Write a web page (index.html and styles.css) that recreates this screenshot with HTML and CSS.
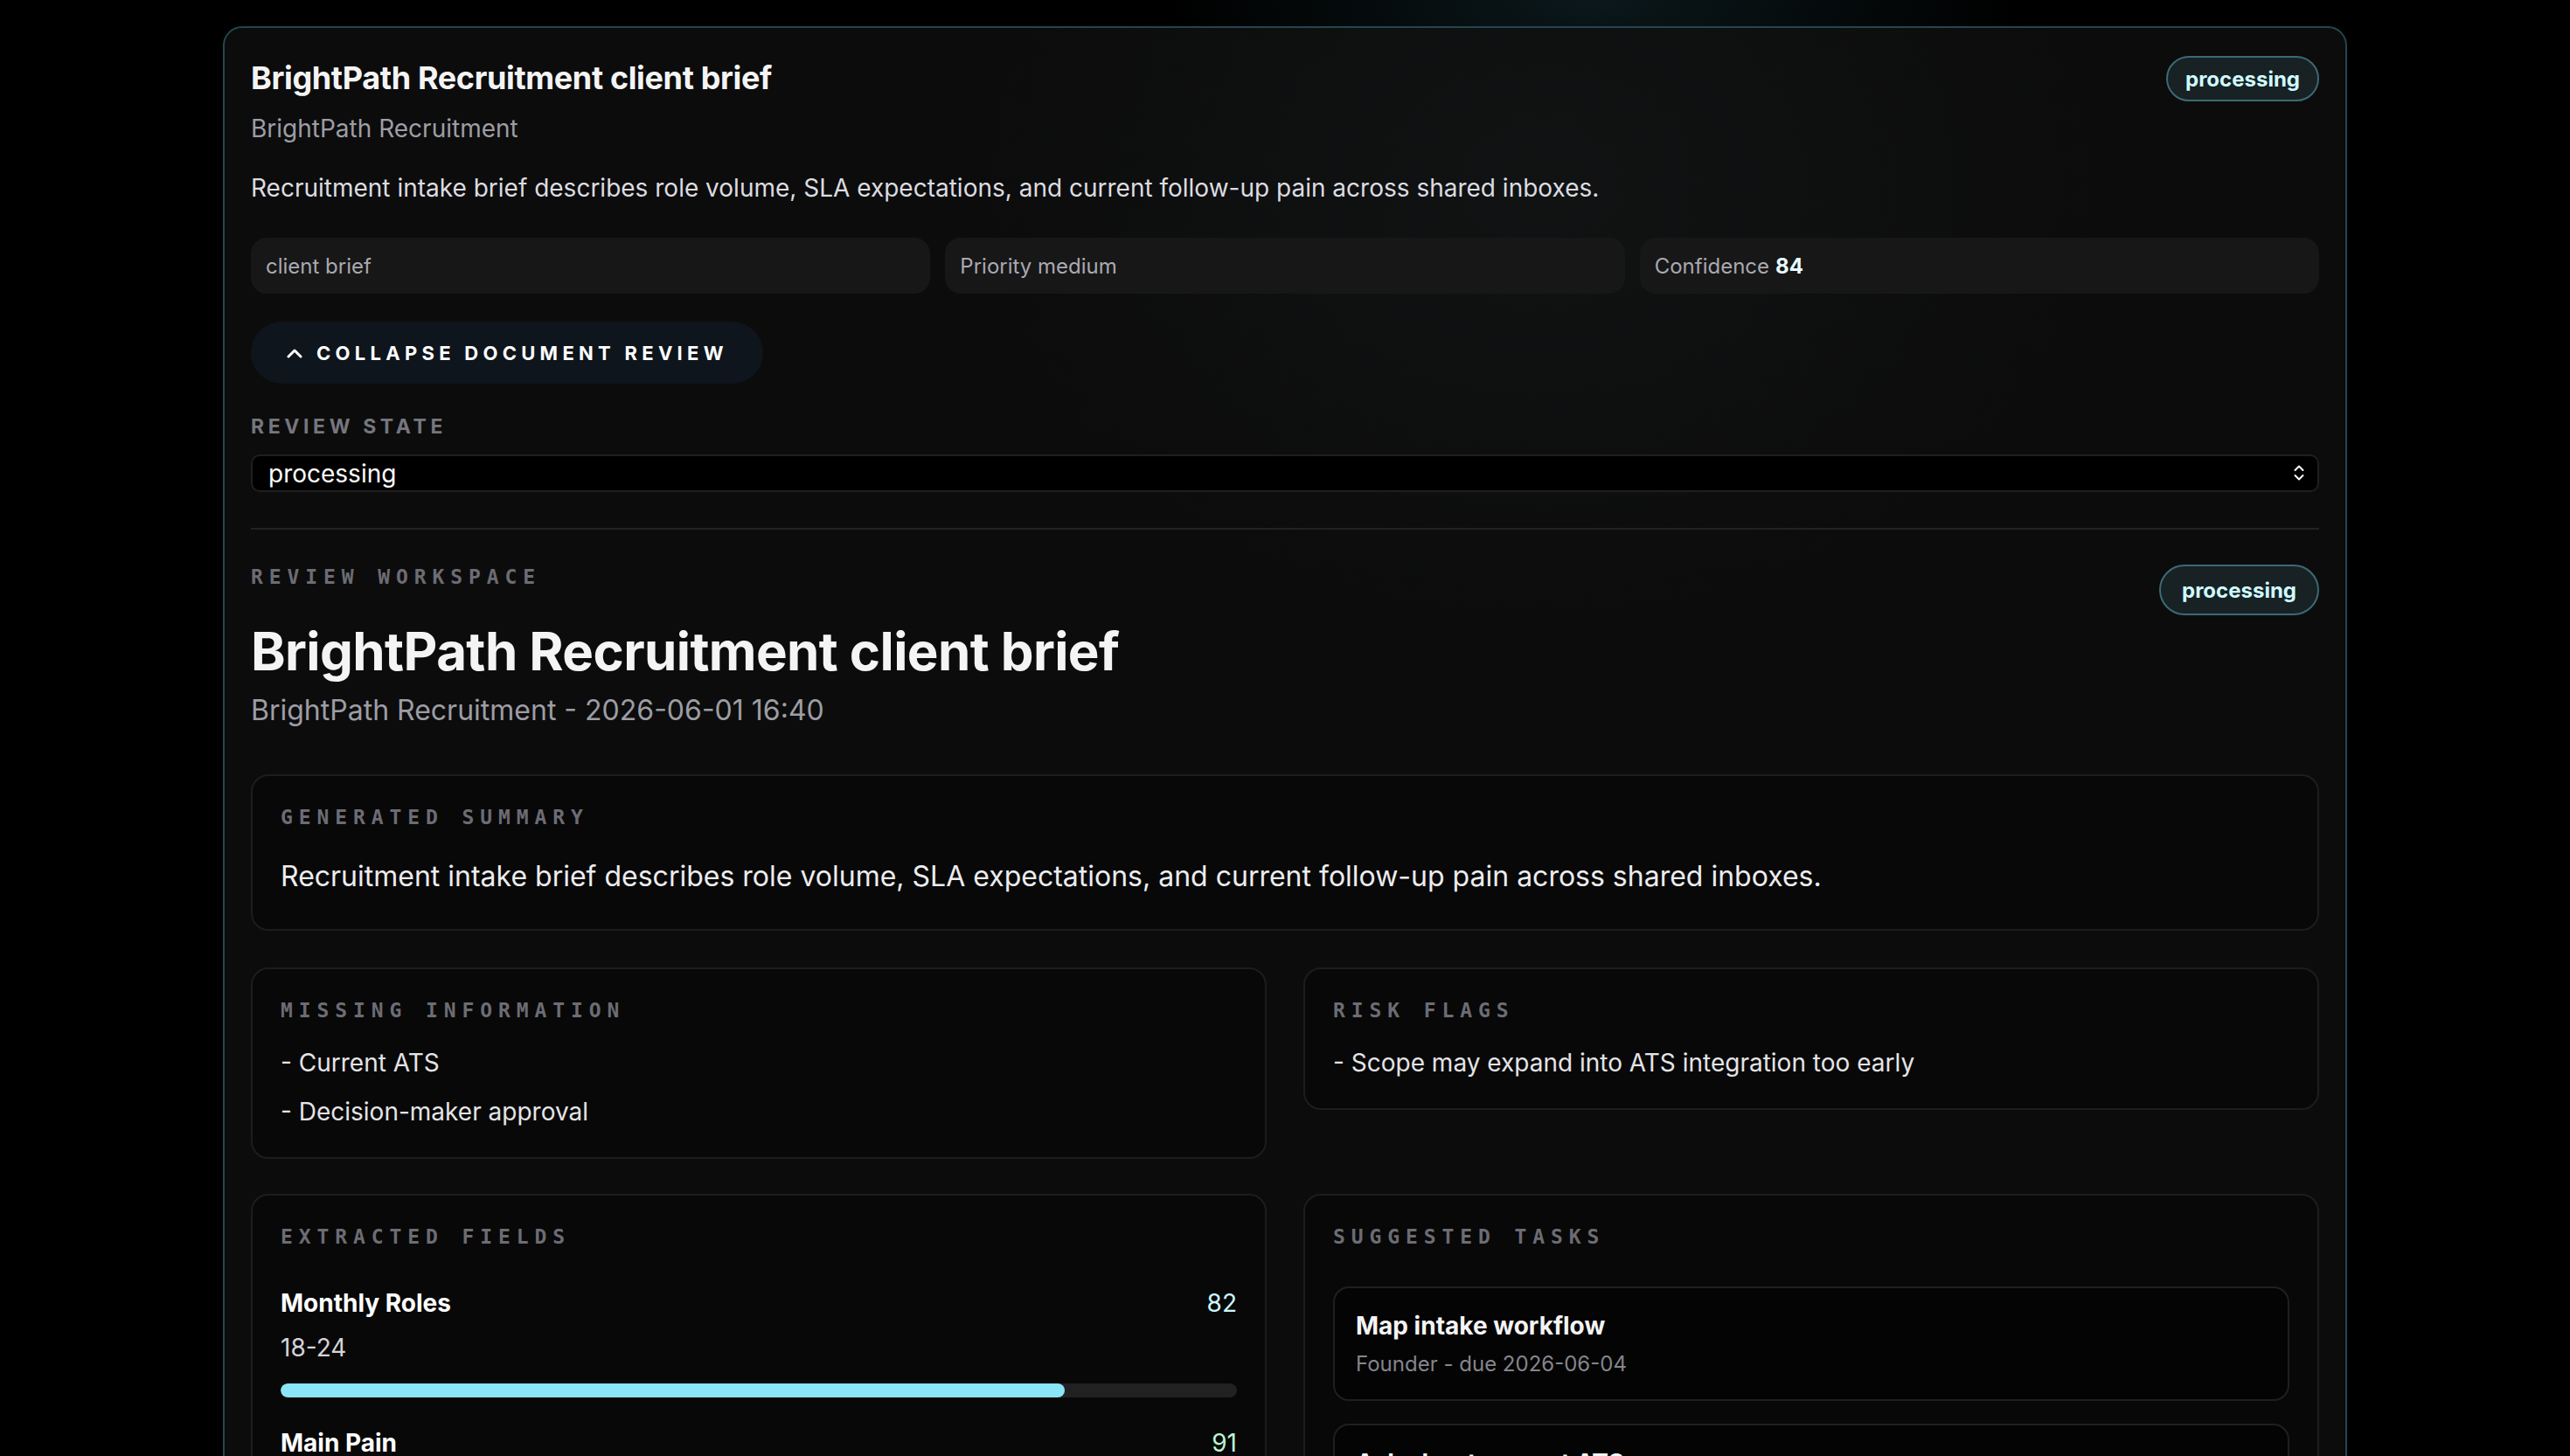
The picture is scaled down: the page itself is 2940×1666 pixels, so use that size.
FILE: index.html
```html
<!DOCTYPE html>
<html lang="en">
<head>
    <meta charset="UTF-8">
    <meta name="viewport" content="width=device-width, initial-scale=1.0">
    <title>BrightPath Recruitment client brief</title>
    <link rel="stylesheet" href="styles.css">
</head>
<body>
    <div class="page">
        <section class="doc-card">
            <div class="doc-head">
                <h2 class="doc-title">BrightPath Recruitment client brief</h2>
                <span class="status-pill">processing</span>
            </div>
            <p class="doc-client">BrightPath Recruitment</p>
            <p class="doc-desc">Recruitment intake brief describes role volume, SLA expectations, and current follow-up pain across shared inboxes.</p>

            <div class="chip-row">
                <div class="chip">client brief</div>
                <div class="chip">Priority medium</div>
                <div class="chip">Confidence <strong>84</strong></div>
            </div>

            <button class="collapse-btn" type="button">
                <svg class="collapse-icon" viewBox="0 0 20 12" width="20" height="12" aria-hidden="true">
                    <path d="M3 10 L10 3 L17 10" fill="none" stroke="#ffffff" stroke-width="3" stroke-linecap="round" stroke-linejoin="round"/>
                </svg>
                Collapse document review
            </button>

            <label class="state-label" for="reviewState">Review state</label>
            <div class="select-wrap">
                <select id="reviewState" class="state-select">
                    <option>processing</option>
                    <option>needs review</option>
                    <option>approved</option>
                </select>
                <svg class="select-arrows" viewBox="0 0 14 22" width="14" height="22" aria-hidden="true">
                    <path d="M2.5 8 L7 3.5 L11.5 8" fill="none" stroke="#ffffff" stroke-width="2" stroke-linecap="round" stroke-linejoin="round"/>
                    <path d="M2.5 14 L7 18.5 L11.5 14" fill="none" stroke="#ffffff" stroke-width="2" stroke-linecap="round" stroke-linejoin="round"/>
                </svg>
            </div>

            <hr class="divider">

            <div class="ws-head">
                <div>
                    <p class="mono-label">Review workspace</p>
                    <h1 class="ws-title">BrightPath Recruitment client brief</h1>
                    <p class="ws-meta">BrightPath Recruitment - 2026-06-01 16:40</p>
                </div>
                <span class="status-pill status-pill-lg">processing</span>
            </div>

            <div class="panel summary">
                <p class="mono-label">Generated summary</p>
                <p class="summary-text">Recruitment intake brief describes role volume, SLA expectations, and current follow-up pain across shared inboxes.</p>
            </div>

            <div class="panel-grid">
                <div class="panel">
                    <p class="mono-label">Missing information</p>
                    <ul class="plain-list">
                        <li>- Current ATS</li>
                        <li>- Decision-maker approval</li>
                    </ul>
                </div>
                <div class="panel">
                    <p class="mono-label">Risk flags</p>
                    <ul class="plain-list">
                        <li>- Scope may expand into ATS integration too early</li>
                    </ul>
                </div>

                <div class="panel">
                    <p class="mono-label">Extracted fields</p>
                    <div class="field-list">
                        <div class="field">
                            <div class="field-top">
                                <span class="field-name">Monthly Roles</span>
                                <span class="field-score">82</span>
                            </div>
                            <div class="field-value">18-24</div>
                            <div class="bar"><div class="bar-fill" style="width: 82%"></div></div>
                        </div>
                        <div class="field">
                            <div class="field-top">
                                <span class="field-name">Main Pain</span>
                                <span class="field-score score-high">91</span>
                            </div>
                            <div class="field-value">Follow-up across shared inboxes</div>
                            <div class="bar"><div class="bar-fill" style="width: 91%"></div></div>
                        </div>
                    </div>
                </div>
                <div class="panel">
                    <p class="mono-label">Suggested tasks</p>
                    <div class="task-list">
                        <div class="task">
                            <div class="task-title">Map intake workflow</div>
                            <div class="task-meta">Founder - due 2026-06-04</div>
                        </div>
                        <div class="task">
                            <div class="task-title">Ask about current ATS</div>
                            <div class="task-meta">Founder - due 2026-06-05</div>
                        </div>
                    </div>
                </div>
            </div>
        </section>
    </div>
</body>
</html>
```

FILE: styles.css
```css
* {
    box-sizing: border-box;
}

body {
    margin: 0;
    padding: 0;
    font-family: Inter, "Noto Sans", sans-serif;
    color: #f4f4f5;
    background:
        radial-gradient(ellipse 700px 260px at 62% 0%, rgba(24, 52, 60, 0.45), transparent 70%),
        #000000;
}

.page {
    padding: 30px 0 60px;
}

.doc-card {
    width: 2430px;
    margin: 0 auto;
    padding: 32px 30px 40px;
    border: 2px solid #24464e;
    border-radius: 22px;
    background:
        radial-gradient(ellipse 900px 700px at 62% 10%, rgba(34, 44, 46, 0.22), transparent 70%),
        #0c0c0c;
}

.doc-head {
    display: flex;
    justify-content: space-between;
    align-items: center;
}

.doc-title {
    margin: 0;
    font-size: 36px;
    font-weight: 700;
    line-height: 1.2;
    letter-spacing: -0.01em;
}

.status-pill {
    display: inline-flex;
    align-items: center;
    height: 52px;
    padding: 0 20px;
    border: 2px solid #3b6a74;
    border-radius: 999px;
    background: #182124;
    color: #cffafe;
    font-size: 24px;
    font-weight: 700;
}

.status-pill-lg {
    height: 58px;
    padding: 0 24px;
    margin-top: 3px;
}

.doc-client {
    margin: 12px 0 0;
    font-size: 28px;
    line-height: 39px;
    color: #9d9da5;
}

.doc-desc {
    margin: 29px 0 0;
    font-size: 28px;
    line-height: 39px;
    color: #dcdce0;
}

.chip-row {
    display: grid;
    grid-template-columns: repeat(3, 1fr);
    gap: 17px;
    margin-top: 37px;
}

.chip {
    display: flex;
    align-items: center;
    height: 64px;
    padding: 0 17px;
    border-radius: 18px;
    background: #171717;
    color: #a9a9b1;
    font-size: 24px;
}

.chip strong {
    margin-left: 7px;
    color: #e8fbff;
    font-weight: 700;
}

.collapse-btn {
    display: flex;
    align-items: center;
    gap: 15px;
    height: 71px;
    margin-top: 32px;
    padding: 0 40px;
    border: none;
    border-radius: 999px;
    background: #0e151c;
    color: #ffffff;
    font-family: Inter, "Noto Sans", sans-serif;
    font-size: 22px;
    font-weight: 700;
    text-transform: uppercase;
    letter-spacing: 0.24em;
    cursor: pointer;
}

.state-label {
    display: block;
    margin-top: 33px;
    font-size: 23px;
    font-weight: 700;
    line-height: 1.4;
    color: #76767e;
    text-transform: uppercase;
    letter-spacing: 0.2em;
}

.select-wrap {
    position: relative;
    margin-top: 16px;
}

.state-select {
    display: block;
    width: 100%;
    height: 43px;
    padding: 0 18px;
    border: 2px solid #1f1f1f;
    border-radius: 10px;
    background: #000000;
    color: #ffffff;
    font-family: Inter, "Noto Sans", sans-serif;
    font-size: 28px;
    appearance: none;
}

.select-arrows {
    position: absolute;
    right: 16px;
    top: 10px;
    pointer-events: none;
}

.divider {
    margin: 41px 0 0;
    border: none;
    border-top: 2px solid #222222;
}

.ws-head {
    display: flex;
    justify-content: space-between;
    align-items: flex-start;
    margin-top: 37px;
}

.mono-label {
    margin: 0;
    font-family: "DejaVu Sans Mono", "Liberation Mono", monospace;
    font-size: 23px;
    font-weight: 700;
    line-height: 34px;
    color: #6c6c74;
    text-transform: uppercase;
    letter-spacing: 0.3em;
}

.ws-title {
    margin: 34px 0 0;
    font-size: 60px;
    font-weight: 700;
    line-height: 1.15;
    letter-spacing: -0.01em;
}

.ws-meta {
    margin: 12px 0 0;
    font-size: 32px;
    line-height: 42px;
    color: #9d9da5;
}

.panel {
    padding: 30px 32px 32px;
    border: 2px solid #1d1d1d;
    border-radius: 20px;
    background: #080808;
}

.summary {
    margin-top: 52px;
    padding-bottom: 38px;
}

.summary-text {
    margin: 28px 0 0;
    font-size: 32px;
    line-height: 45px;
    color: #ececef;
}

.panel-grid {
    display: grid;
    grid-template-columns: 1fr 1fr;
    gap: 40px 42px;
    align-items: start;
    margin-top: 42px;
}

.plain-list {
    margin: 24px 0 0;
    padding: 0;
    list-style: none;
    display: flex;
    flex-direction: column;
    gap: 17px;
    font-size: 28px;
    line-height: 39px;
    color: #e4e4e7;
}

.field-list {
    display: flex;
    flex-direction: column;
    gap: 33px;
    margin-top: 40px;
}

.field-top {
    display: flex;
    justify-content: space-between;
    align-items: center;
    font-size: 28px;
    line-height: 38px;
}

.field-name {
    font-weight: 700;
    color: #ffffff;
}

.field-score {
    color: #cdf7fc;
}

.score-high {
    color: #b9f5d3;
}

.field-value {
    margin-top: 13px;
    font-size: 28px;
    line-height: 39px;
    color: #d4d4d8;
}

.bar {
    height: 16px;
    margin-top: 21px;
    border-radius: 8px;
    background: #212121;
    overflow: hidden;
}

.bar-fill {
    height: 100%;
    border-radius: 8px;
    background: #8ae5f7;
}

.task-list {
    display: flex;
    flex-direction: column;
    gap: 26px;
    margin-top: 40px;
}

.task {
    padding: 24px 24px 23px;
    border: 2px solid #1f1f1f;
    border-radius: 18px;
    background: #040404;
}

.task-title {
    font-size: 28px;
    font-weight: 700;
    line-height: 38px;
}

.task-meta {
    margin-top: 8px;
    font-size: 24px;
    line-height: 1.4;
    color: #85858d;
}
```
